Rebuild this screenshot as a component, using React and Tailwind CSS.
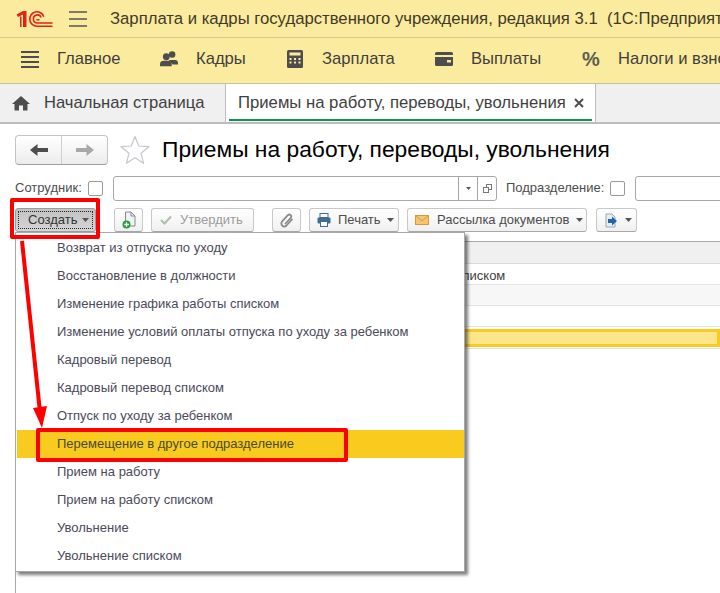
import React from "react";

const Caret = ({ c = "#555" }) => (
  <svg width="7" height="4" viewBox="0 0 7 4" className="shrink-0"><path d="M0 0h7L3.5 4z" fill={c} /></svg>
);

const Logo = () => (
  <svg width="37" height="18" viewBox="0 0 37 18" fill="none" className="shrink-0">
    <path d="M0.500 4.500 7 1h3.500v16H7V4.500L2 7z" fill="#e2231a" />
    <path d="M4 6.500h1.500V17H4z" fill="#e2231a" />
    <path d="M36.500 16.200H21a7.200 7.200 0 1 1 6.800-9.500" stroke="#e2231a" strokeWidth="1.600" />
    <path d="M36.500 13H21.500a4 4 0 1 1 3.600-5.500" stroke="#e2231a" strokeWidth="1.600" />
    <path d="M20.500 9.800h3" stroke="#e2231a" strokeWidth="1.500" />
  </svg>
);

const NavItem = ({ icon, label, w }) => (
  <div className={`flex items-center shrink-0 ${w}`}>
    <span className="w-[18px] h-[18px] flex items-center justify-center shrink-0">{icon}</span>
    <span className="ml-[18px] text-[16.6px] text-[#3f3f3f] whitespace-nowrap">{label}</span>
  </div>
);

const ToolBtn = ({ className = "", children }) => (
  <div className={`h-[24px] shrink-0 flex items-center rounded-[3px] border border-[#c8c8c8] border-b-[#a8a8a8] bg-gradient-to-b from-white to-[#f0f0f0] ${className}`}>
    {children}
  </div>
);

const items = [
  "Возврат из отпуска по уходу",
  "Восстановление в должности",
  "Изменение графика работы списком",
  "Изменение условий оплаты отпуска по уходу за ребенком",
  "Кадровый перевод",
  "Кадровый перевод списком",
  "Отпуск по уходу за ребенком",
  "Перемещение в другое подразделение",
  "Прием на работу",
  "Прием на работу списком",
  "Увольнение",
  "Увольнение списком",
];

export default function App() {
  return (
    <div className="w-[720px] h-[593px] overflow-hidden relative bg-white" style={{ fontFamily: '"Liberation Sans", Arial, sans-serif' }}>
      {/* title bar */}
      <div className="h-[38px] bg-[#fbeb9e] border-b border-[#d3c78c] flex items-center pl-[16px] overflow-hidden">
        <Logo />
        <svg width="18" height="16" viewBox="0 0 18 16" className="ml-[16px] shrink-0"><path d="M0 1h18M0 8h18M0 15h18" stroke="#555" strokeWidth="1.3" /></svg>
        <span className="ml-[23px] text-[16.7px] text-[#3f3a28] whitespace-nowrap">Зарплата и кадры государственного учреждения, редакция 3.1&nbsp; (1С:Предприятие)</span>
      </div>
      {/* section bar */}
      <div className="h-[46px] bg-[#fbeb9e] border-b border-[#c9c39a] flex items-center pl-[21px] pb-[2px] overflow-hidden">
        <NavItem w="w-[139px]" label="Главное" icon={
          <svg width="18" height="18" viewBox="0 0 18 18"><path d="M0 2h18M0 7h18M0 12h18M0 17h18" stroke="#4d4d4d" strokeWidth="2" /></svg>} />
        <NavItem w="w-[126px]" label="Кадры" icon={
          <svg width="20" height="20" viewBox="0 0 20 20" fill="#4d4d4d"><circle cx="13.5" cy="5" r="3.6"/><path d="M10 11h7c2 0 3 1.500 3 3.500V16h-6z"/><circle cx="7" cy="7.500" r="3.800"/><path d="M0 18v-2.500C0 13 2 12 4 12h6c2 0 3 1.500 3 3.500V18z"/></svg>} />
        <NavItem w="w-[149px]" label="Зарплата" icon={
          <svg width="16" height="18" viewBox="0 0 16 18"><rect x="0" y="0" width="16" height="18" rx="1.500" fill="#4d4d4d"/><rect x="2.500" y="2.500" width="11" height="3" fill="#fbeb9e"/><path d="M2.500 8h2v2h-2zM7 8h2v2H7zM11.500 8h2v2h-2zM2.500 11.500h2v2h-2zM7 11.500h2v2H7zM11.500 11.500h2v2h-2z" fill="#fbeb9e"/></svg>} />
        <NavItem w="w-[147px]" label="Выплаты" icon={
          <svg width="18" height="14" viewBox="0 0 18 14"><rect width="18" height="14" rx="1.500" fill="#4d4d4d"/><rect y="3" width="18" height="2" fill="#fbeb9e"/><rect x="12" y="8" width="4" height="2.500" fill="#fbeb9e"/></svg>} />
        <NavItem w="w-[120px]" label="Налоги и взносы" icon={<span className="text-[20px] font-bold text-[#5d5d50]">%</span>} />
      </div>
      {/* tabs */}
      <div className="h-[40px] bg-[#f0f0f0] border-b-2 border-[#bdbdbd] flex">
        <div className="w-[226px] shrink-0 border-r border-[#bdbdbd] flex items-center pl-[12px]">
          <svg width="18" height="16" viewBox="0 0 18 16" fill="#4d4d4d"><path d="M9 1 0 9h2.500v6.500H7V10.500h4v5h4.500V9H18z"/></svg>
          <span className="ml-[14px] text-[16.6px] text-[#3f3f3f] whitespace-nowrap">Начальная страница</span>
        </div>
        <div className="relative w-[370px] shrink-0 bg-white border-r border-[#bdbdbd] flex items-center pl-[12px]">
          <span className="text-[16.7px] text-[#3f3f3f] whitespace-nowrap">Приемы на работу, переводы, увольнения</span>
          <svg width="10" height="10" viewBox="0 0 10 10" className="ml-[8px]"><path d="M1 1l8 8M9 1l-8 8" stroke="#4d4d4d" strokeWidth="2" /></svg>
          <div className="absolute left-[3px] right-[3px] bottom-[1px] h-[2px] bg-[#0d9549]" />
        </div>
      </div>
      {/* title row */}
      <div className="h-[51px] pl-[15px] flex items-center">
        <div className="w-[93px] h-[30px] flex rounded-[4px] border border-[#c4c4c4] border-b-[#a0a0a0] bg-gradient-to-b from-white to-[#ececec] shrink-0">
          <div className="w-[46px] border-r border-[#cfcfcf] flex items-center justify-center">
            <svg width="18" height="14" viewBox="0 0 18 14" fill="#4d4d4d"><path d="M0 7 7.500 1v4H18v4H7.500v4z"/></svg>
          </div>
          <div className="flex-1 flex items-center justify-center">
            <svg width="18" height="14" viewBox="0 0 18 14" fill="#a8a8a8"><path d="M18 7 10.500 1v4H0v4h10.500v4z"/></svg>
          </div>
        </div>
        <svg width="30" height="30" viewBox="0 0 30 30" className="ml-[12px] shrink-0" fill="none"><path d="M15 1.500 18.700 11l10.300.7-8 6.600 2.600 10L15 22.800 6.400 28.300l2.600-10-8-6.600L11.300 11z" stroke="#c4c8cc" strokeWidth="1.200" strokeLinejoin="round" /></svg>
        <h1 className="ml-[12px] text-[22.8px] text-black whitespace-nowrap">Приемы на работу, переводы, увольнения</h1>
      </div>
      {/* filter row */}
      <div className="h-[26px] pl-[15px] flex items-center text-[13px] text-[#4d4d4d] whitespace-nowrap">
        <span className="w-[67px] shrink-0">Сотрудник:</span>
        <span className="ml-[6px] w-[15px] h-[15px] shrink-0 rounded-[2px] border border-[#9a9a9a]" />
        <div className="ml-[10px] w-[384px] h-[25px] shrink-0 rounded-[3px] border border-[#a8a8a8] flex justify-end">
          <div className="w-[19px] border-l border-[#a8a8a8] flex items-center justify-center"><svg width="5" height="3" viewBox="0 0 5 3"><path d="M0 0h5L2.500 3z" fill="#555" /></svg></div>
          <div className="w-[19px] border-l border-[#a8a8a8] flex items-center justify-center">
            <svg width="9" height="9" viewBox="0 0 9 9" fill="none" stroke="#777"><rect x="3.500" y="0.500" width="5" height="5"/><rect x="0.500" y="3.500" width="5" height="5" fill="#fff"/></svg>
          </div>
        </div>
        <span className="ml-[9px] w-[98px] shrink-0">Подразделение:</span>
        <span className="ml-[6px] w-[15px] h-[15px] shrink-0 rounded-[2px] border border-[#9a9a9a]" />
        <div className="ml-[10px] w-[120px] h-[25px] shrink-0 rounded-l-[3px] border border-[#a8a8a8]" />
      </div>
      {/* toolbar */}
      <div className="h-[24px] mt-[7px] pl-[15px] flex items-center text-[13px] text-[#4d4d4d] whitespace-nowrap">
        <div className="w-[81px] h-[24px] shrink-0 rounded-[3px] bg-gradient-to-b from-[#c2c2c2] to-[#d6d6d6] border border-[#9c9c9c] flex items-center p-[2px]">
          <div className="w-full h-full border border-dotted border-[#222] flex items-center pl-[9px] gap-[5px] text-[#333]">Создать <Caret /></div>
        </div>
        <ToolBtn className="ml-[18px] w-[29px] justify-center">
          <svg width="14" height="18" viewBox="0 0 14 18" fill="none"><path d="M3.500 1h5.500l4 4v10h-9.500z" fill="#eef1f5" stroke="#8a8a8a"/><path d="M9 1v4h4" stroke="#8a8a8a"/><circle cx="4.500" cy="13.500" r="4" fill="#2b9a3e"/><path d="M2.200 13.500h4.600M4.500 11.200v4.600" stroke="#fff" strokeWidth="1.300"/></svg>
        </ToolBtn>
        <ToolBtn className="ml-[8px] w-[103px] pl-[8px] gap-[6px] text-[#9c9c9c]">
          <svg width="12" height="10" viewBox="0 0 12 10" fill="none"><path d="M1 5l3.500 3.500L11 1.500" stroke="#a9bfa9" strokeWidth="2"/></svg>
          <span className="ml-[2px]">Утвердить</span>
        </ToolBtn>
        <ToolBtn className="ml-[18px] w-[29px] justify-center">
          <svg width="14" height="16" viewBox="0 0 14 16" fill="none"><path d="M12.500 7 6.500 13.500a3 3 0 0 1-4.300-4.200L8 3a2 2 0 0 1 2.800 2.800L5 12" stroke="#8a8a8a" strokeWidth="1.800"/></svg>
        </ToolBtn>
        <ToolBtn className="ml-[8px] w-[90px] pl-[7px] gap-[6px]">
          <svg width="14" height="14" viewBox="0 0 14 14"><rect x="3" y="0.500" width="8" height="4" fill="#fff" stroke="#3f6d96"/><rect x="0.500" y="4.500" width="13" height="6" rx="1" fill="#3f6d96"/><rect x="3.500" y="8.500" width="7" height="5" fill="#fff" stroke="#3f6d96"/></svg>
          <span className="ml-[1px]">Печать</span><Caret />
        </ToolBtn>
        <ToolBtn className="ml-[8px] w-[180px] pl-[7px] gap-[6px]">
          <svg width="14" height="10" viewBox="0 0 14 10"><rect x="0.500" y="0.500" width="13" height="9" fill="#f4c671" stroke="#d99a3a"/><path d="M1 1l6 5 6-5" fill="none" stroke="#d99a3a"/></svg>
          <span className="ml-[2px]">Рассылка документов</span><Caret />
        </ToolBtn>
        <ToolBtn className="ml-[9px] w-[41px] pl-[7px] gap-[6px]">
          <svg width="15" height="15" viewBox="0 0 15 15"><path d="M2 1h6l3 3v10H2z" fill="#e8edf3" stroke="#9aa"/><path d="M4 6h4V3.500L13 8l-5 4.500V10H4z" fill="#1c66b8"/></svg>
          <Caret />
        </ToolBtn>
      </div>
      {/* list table */}
      <div className="mt-[9px] ml-[15px] h-[352px] border-l border-t border-[#a8a8a8]">
        <div className="h-[22px] bg-[#f0f0f0] border-b border-[#dcdcdc]" />
        <div className="h-[21px] border-b border-[#e4e4e4] flex items-center pt-[3px] pl-[440px] text-[13px] text-[#3f3f3f]">списком</div>
        <div className="h-[21px] border-b border-[#e4e4e4] bg-[#f7f7f7]" />
        <div className="h-[21px] border-b border-[#e4e4e4]" />
        <div className="h-[1px] mt-[1px]" />
        <div className="h-[18px] bg-[#fde58b] border-[3px] border-[#f9cb1f]" />
        <div className="h-[1px] mt-[1px] bg-[#e4e4e4]" />
      </div>
      {/* dropdown */}
      <div className="absolute left-[15px] top-[232px] w-[450px] h-[340px] bg-white border border-[#a8a8a8] shadow-[3px_3px_3px_rgba(0,0,0,0.5)] pt-[1px] pl-[1px] text-[13px] text-[#4a4a5a]">
        {items.map((t, i) => (
          <div key={t} className={`h-[28px] flex items-center pl-[40px] whitespace-nowrap ${i === 7 ? "bg-[#f9cb1f] text-[#4a4a2a]" : ""}`}>{t}</div>
        ))}
      </div>
      {/* annotations */}
      <div className="absolute left-[10px] top-[198px] w-[90px] h-[41px] border-[4px] border-[#fe0000] rounded-[2px]" />
      <div className="absolute left-[36px] top-[428px] w-[312px] h-[34px] border-[4px] border-[#fe0000] rounded-[2px]" />
      <svg className="absolute left-0 top-0 pointer-events-none" width="60" height="440" viewBox="0 0 60 440">
        <path d="M22 241 40 412" stroke="#fe0000" strokeWidth="4" fill="none" />
        <path d="M33 408 47 406 42 428z" fill="#fe0000" />
      </svg>
    </div>
  );
}
